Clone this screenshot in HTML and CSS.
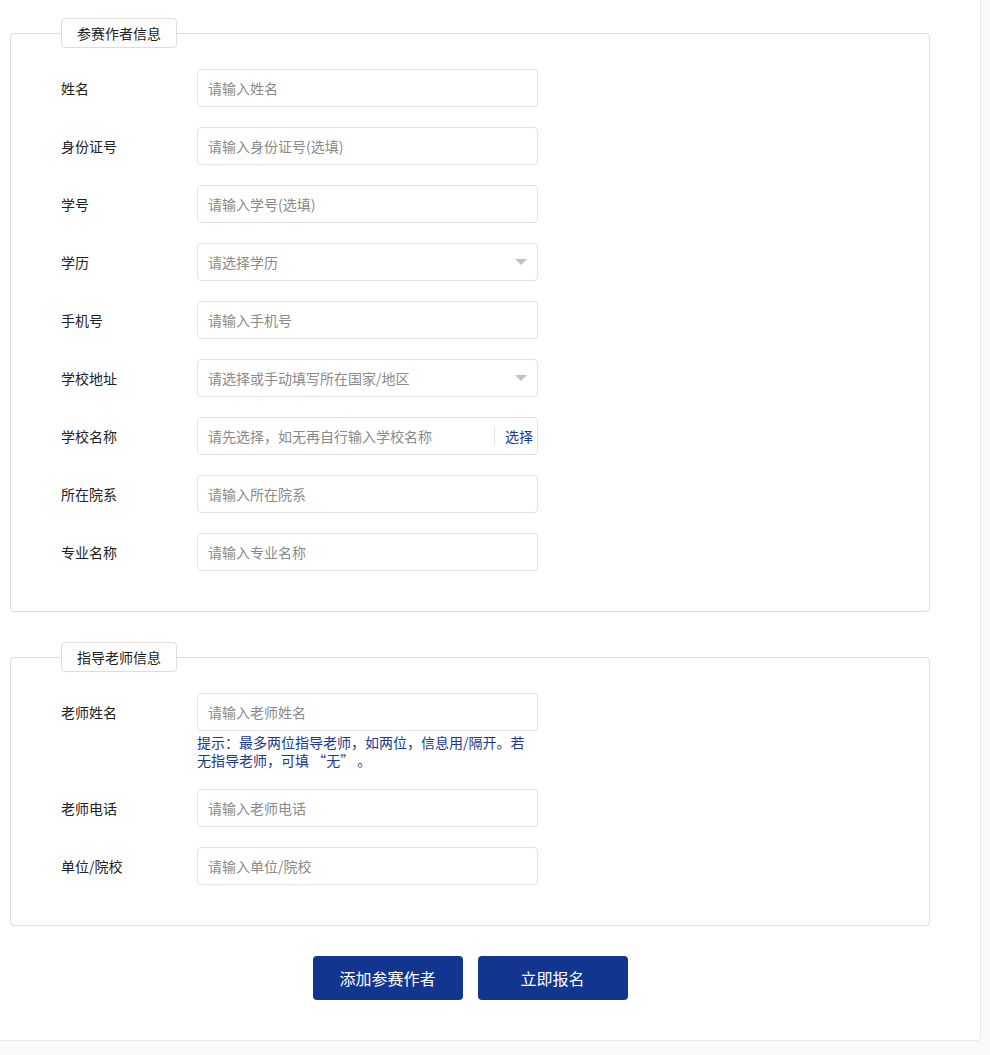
FILE: index.html
```html
<!DOCTYPE html>
<html lang="zh-CN">

<head>
  <meta charset="UTF-8">
  <meta name="viewport" content="width=device-width, initial-scale=1.0">
  <title>报名</title>
  <link rel="stylesheet" href="styles.css">
</head>

<body>
  <div class="page">
    <fieldset class="group">
      <legend>参赛作者信息</legend>
      <div class="row">
        <label>姓名</label>
        <input class="field" type="text" placeholder="请输入姓名">
      </div>
      <div class="row">
        <label>身份证号</label>
        <input class="field" type="text" placeholder="请输入身份证号(选填)">
      </div>
      <div class="row">
        <label>学号</label>
        <input class="field" type="text" placeholder="请输入学号(选填)">
      </div>
      <div class="row">
        <label>学历</label>
        <div class="field select">
          <span>请选择学历</span>
          <i class="arrow"></i>
        </div>
      </div>
      <div class="row">
        <label>手机号</label>
        <input class="field" type="text" placeholder="请输入手机号">
      </div>
      <div class="row">
        <label>学校地址</label>
        <div class="field select">
          <span>请选择或手动填写所在国家/地区</span>
          <i class="arrow"></i>
        </div>
      </div>
      <div class="row">
        <label>学校名称</label>
        <div class="field combo">
          <input type="text" placeholder="请先选择，如无再自行输入学校名称">
          <span class="pick">选择</span>
        </div>
      </div>
      <div class="row">
        <label>所在院系</label>
        <input class="field" type="text" placeholder="请输入所在院系">
      </div>
      <div class="row">
        <label>专业名称</label>
        <input class="field" type="text" placeholder="请输入专业名称">
      </div>
    </fieldset>

    <fieldset class="group">
      <legend>指导老师信息</legend>
      <div class="row">
        <label>老师姓名</label>
        <div class="col">
          <input class="field" type="text" placeholder="请输入老师姓名">
          <p class="hint">提示：最多两位指导老师，如两位，信息用/隔开。若无指导老师，可填 “无” 。</p>
        </div>
      </div>
      <div class="row">
        <label>老师电话</label>
        <input class="field" type="text" placeholder="请输入老师电话">
      </div>
      <div class="row">
        <label>单位/院校</label>
        <input class="field" type="text" placeholder="请输入单位/院校">
      </div>
    </fieldset>

    <div class="actions">
      <button type="button">添加参赛作者</button>
      <button type="button">立即报名</button>
    </div>
  </div>
</body>

</html>
```

FILE: styles.css
```css
body {
  margin: 0;
  padding: 0;
  font-family: "Noto Sans CJK SC", "Noto Sans", sans-serif;
  background-color: #f9f9f9;
  color: #333;
}

.page {
  width: 981px;
  box-sizing: border-box;
  padding: 18px 0 40px 10px;
  background: #ffffff;
  border-right: 1px solid #e8e8e8;
  border-bottom: 1px solid #e8e8e8;
  border-bottom-right-radius: 4px;
}

.group {
  width: 920px;
  box-sizing: border-box;
  margin: 0 0 30px 0;
  padding: 21px 0 20px 50px;
  border: 1px solid #dddddd;
  border-radius: 4px;
}

legend {
  padding: 0 15px;
  height: 30px;
  box-sizing: border-box;
  line-height: 28px;
  font-size: 14px;
  color: #222;
  background: #ffffff;
  border: 1px solid #dddddd;
  border-radius: 4px;
}

.row {
  display: flex;
  align-items: flex-start;
  margin-bottom: 20px;
}

.row label {
  width: 136px;
  flex-shrink: 0;
  font-size: 14px;
  line-height: 38px;
  color: #222;
}

.field {
  width: 341px;
  height: 38px;
  box-sizing: border-box;
  padding: 0 10px;
  border: 1px solid #e2e2e2;
  border-radius: 4px;
  font-family: inherit;
  font-size: 14px;
  color: #333;
  background: #ffffff;
  outline: none;
}

.field::placeholder,
.combo input::placeholder {
  color: #8a8a8a;
}

.select {
  display: flex;
  align-items: center;
  justify-content: space-between;
  color: #8a8a8a;
  padding-right: 10px;
}

.arrow {
  width: 0;
  height: 0;
  border-left: 6px solid transparent;
  border-right: 6px solid transparent;
  border-top: 6px solid #c2c2c2;
}

.combo {
  display: flex;
  align-items: center;
  padding-right: 4px;
}

.combo input {
  flex: 1;
  min-width: 0;
  border: none;
  padding: 0;
  height: 36px;
  font-family: inherit;
  font-size: 14px;
  outline: none;
}

.pick {
  padding-left: 10px;
  border-left: 1px solid #e2e2e2;
  line-height: 18px;
  font-size: 14px;
  color: #1b3a8c;
}

.col {
  width: 341px;
}

.hint {
  margin: 2px 0 0 0;
  font-size: 14px;
  line-height: 18px;
  color: #1b3a8c;
}

.actions {
  width: 920px;
  display: flex;
  justify-content: center;
  gap: 15px;
}

.actions button {
  width: 150px;
  height: 44px;
  border: none;
  border-radius: 4px;
  background: #12358f;
  color: #ffffff;
  font-family: inherit;
  font-size: 16px;
  cursor: pointer;
}
```
